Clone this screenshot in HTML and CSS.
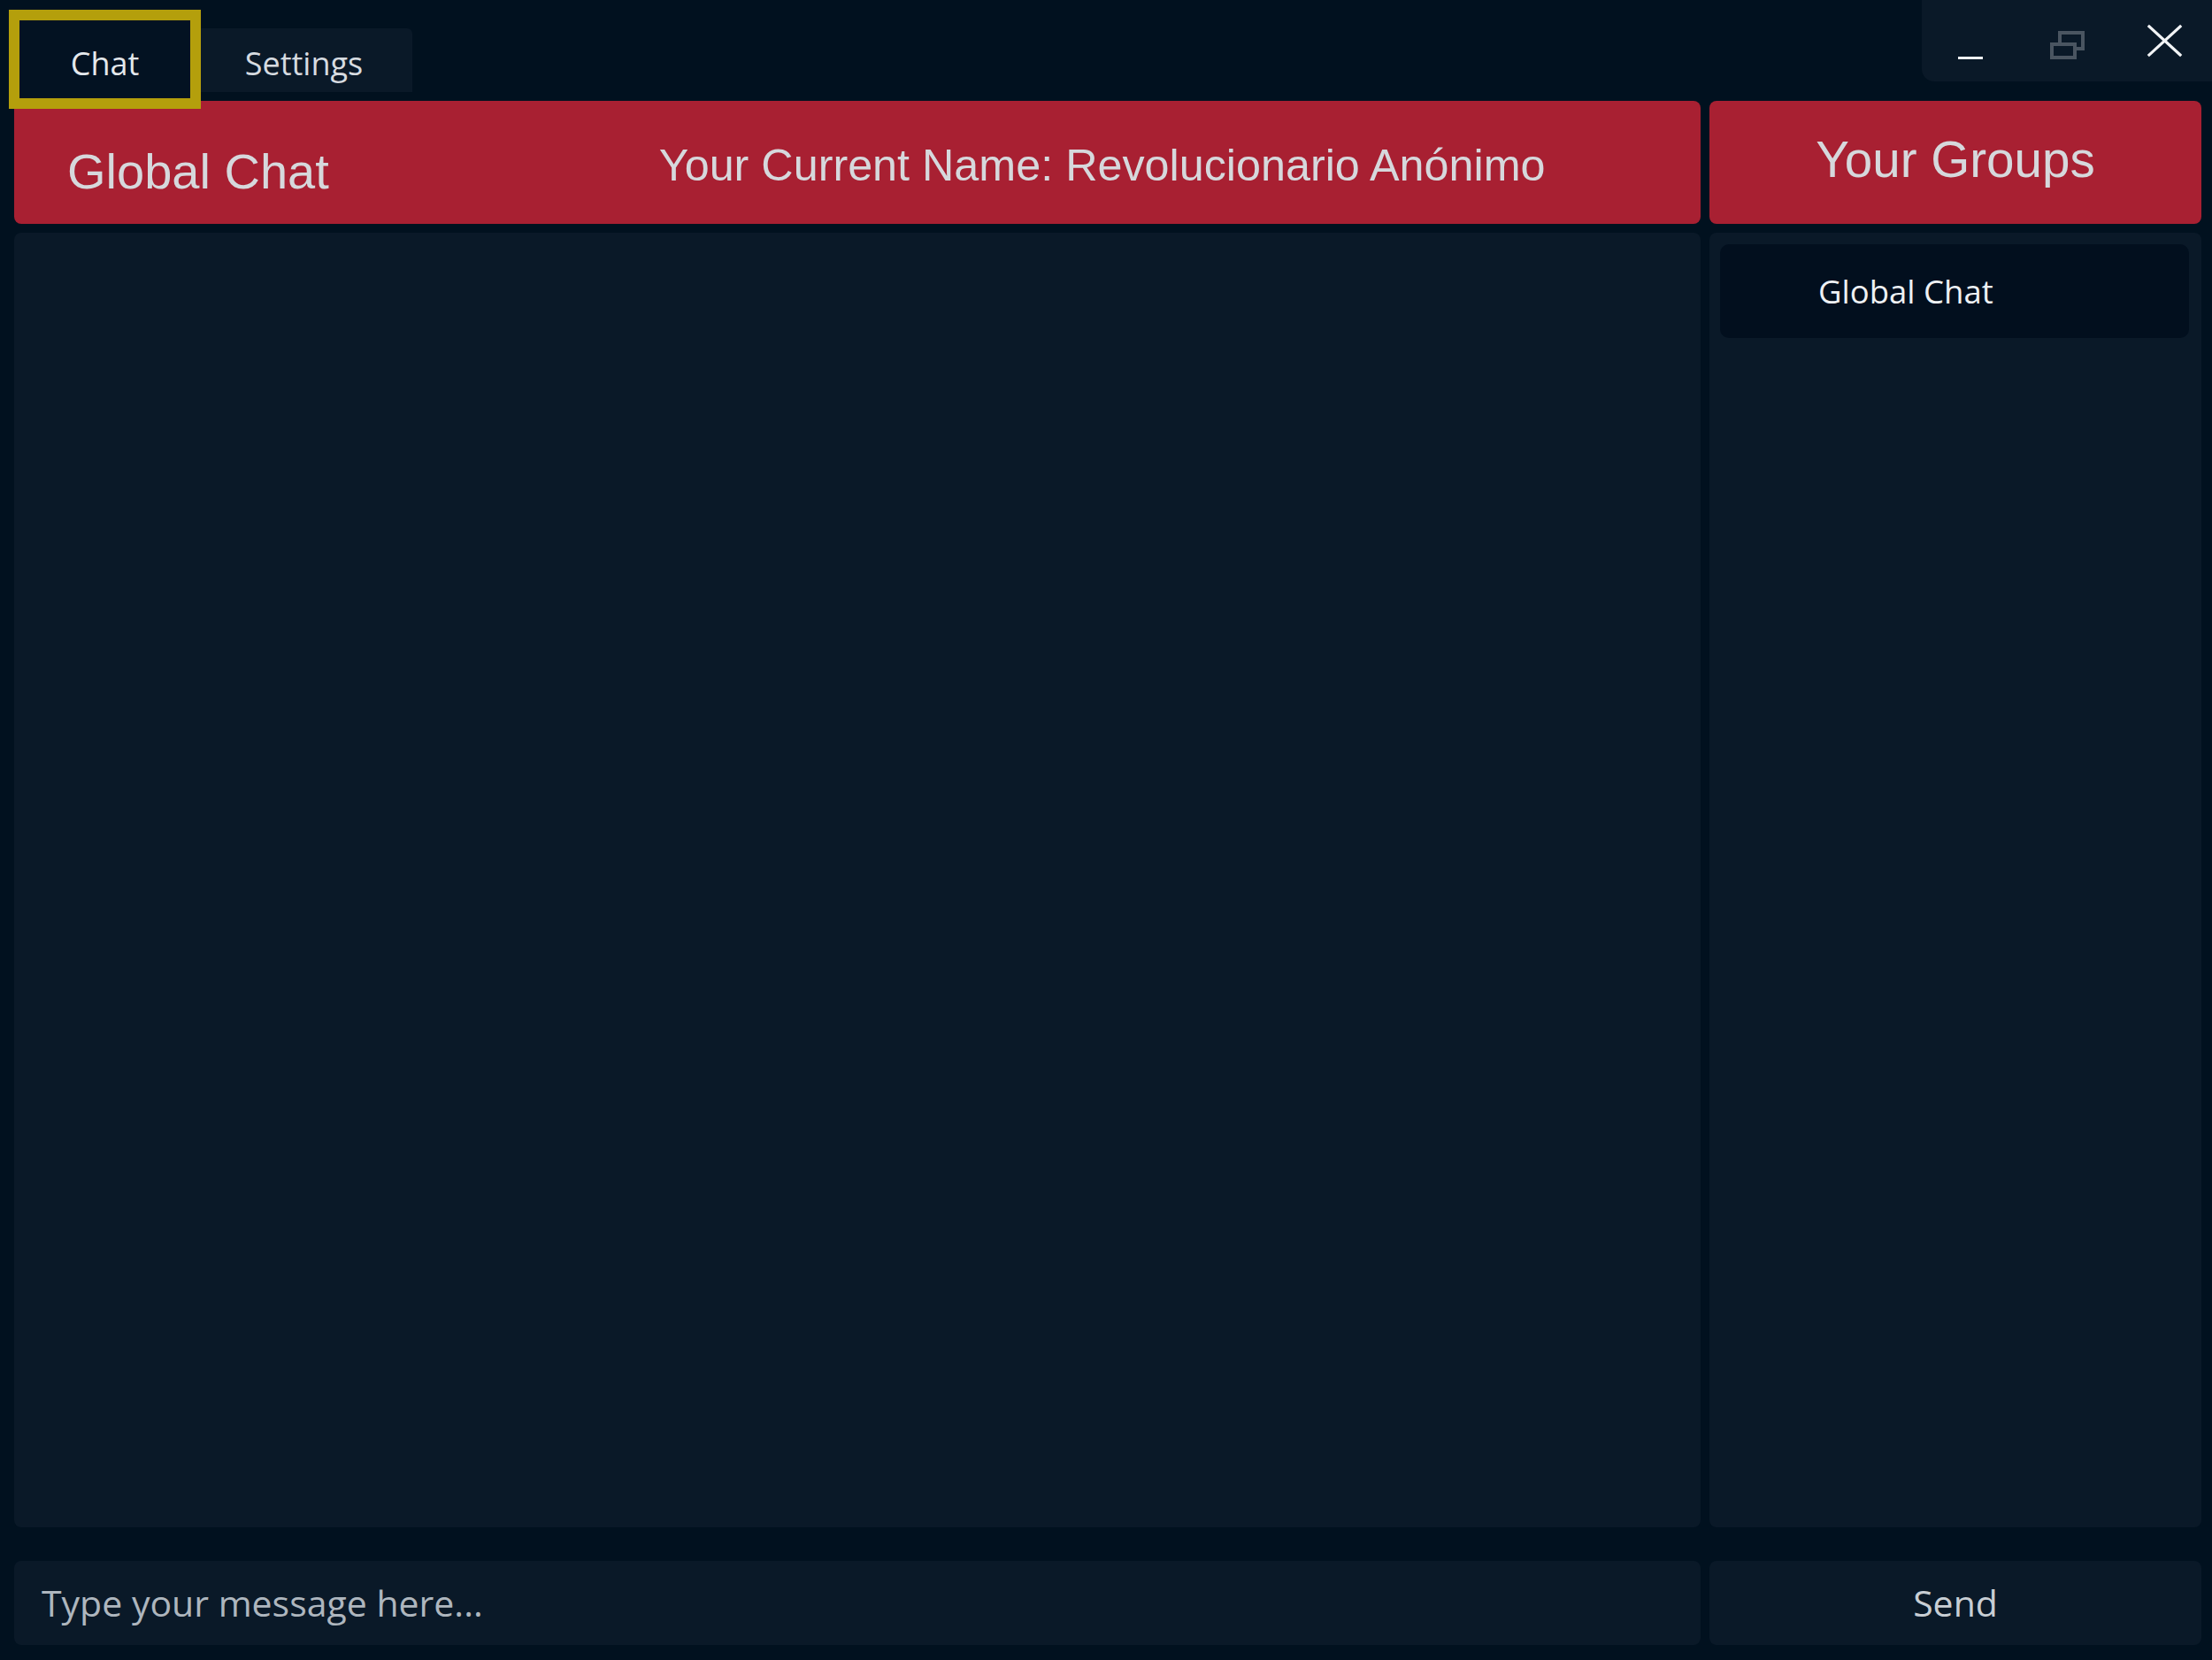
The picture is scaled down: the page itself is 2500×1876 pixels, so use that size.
FILE: index.html
```html
<!DOCTYPE html>
<html lang="en">
<head>
<meta charset="utf-8">
<title>Chat</title>
<link rel="stylesheet" href="styles.css">
</head>
<body>
<div class="app">
  <div class="topbar">
    <div class="tabs">
      <div class="tab tab-active">Chat</div>
      <div class="tab tab-settings">Settings</div>
    </div>
    <div class="winctrl">
      <svg class="winctrl-icons" width="328" height="92" viewBox="0 0 328 92">
        <rect x="41" y="64" width="28" height="3" fill="#eef0f2"/>
        <rect x="156" y="37" width="26" height="18" fill="none" stroke="#4a5561" stroke-width="4"/>
        <rect x="147" y="50" width="26" height="15" fill="#0a1928" stroke="#4a5561" stroke-width="4"/>
        <path d="M257 30 L292 62 M292 30 L257 62" stroke="#f2f4f6" stroke-width="3.2" stroke-linecap="square"/>
      </svg>
    </div>
  </div>
  <div class="main">
    <div class="hdr hdr-left">
      <div class="hdr-title">Global Chat</div>
      <div class="hdr-name">Your Current Name: Revolucionario Anónimo</div>
    </div>
    <div class="hdr hdr-right">
      <div class="hdr-groups">Your Groups</div>
    </div>
    <div class="panel chat-panel"></div>
    <div class="panel groups-panel">
      <div class="group-item">Global Chat</div>
    </div>
    <div class="input-box">Type your message here...</div>
    <div class="send-btn">Send</div>
  </div>
</div>
</body>
</html>
```
FILE: styles.css
```css
html, body {
  margin: 0;
  padding: 0;
  background: #01111f;
}
body {
  width: 2500px;
  height: 1876px;
  overflow: hidden;
  font-family: "Open Sans", "Noto Sans", sans-serif;
}
.app {
  display: flex;
  flex-direction: column;
}
.topbar {
  height: 114px;
  display: flex;
  justify-content: space-between;
  align-items: flex-start;
}
.tabs {
  display: flex;
  align-items: flex-start;
}
.tab {
  box-sizing: border-box;
  display: flex;
  align-items: center;
  justify-content: center;
  font-size: 36px;
  line-height: 1;
}
.tab-active {
  position: relative;
  z-index: 2;
  margin: 11px 0 0 10px;
  width: 217px;
  height: 112px;
  border: 12px solid rgba(243, 209, 5, 0.743);
  background: #031222;
  color: #e4e8ec;
  padding-top: 9px;
}
.tab-settings {
  margin-top: 32px;
  width: 239px;
  height: 72px;
  background: #0a1928;
  border-radius: 0 6px 0 0;
  color: #d6dbe0;
  padding-top: 7px;
  padding-right: 6px;
}
.winctrl {
  width: 328px;
  height: 92px;
  background: #0a1928;
  border-bottom-left-radius: 14px;
}
.winctrl-icons {
  display: block;
}
.main {
  display: grid;
  grid-template-columns: 1906px 556px;
  grid-template-rows: 139px 1463px 95px;
  column-gap: 10px;
  row-gap: 10px;
  padding: 0 12px 0 16px;
}
.hdr {
  background: #a82032;
  border-radius: 8px;
  display: flex;
  align-items: flex-start;
  font-family: "Liberation Sans", Arial, sans-serif;
  color: #d6d8dc;
  line-height: 1;
  white-space: nowrap;
}
.hdr-left {
  padding-left: 60px;
}
.hdr-title {
  font-size: 56px;
  margin-top: 52px;
}
.hdr-name {
  font-size: 50.3px;
  margin-top: 48px;
  margin-left: 373px;
}
.hdr-right {
  justify-content: center;
}
.hdr-groups {
  font-size: 56.6px;
  margin-top: 39px;
}
.panel {
  background: #0a1928;
  border-radius: 8px;
}
.groups-panel {
  box-sizing: border-box;
  padding: 13px 14px 0 12px;
}
.group-item {
  height: 106px;
  background: #020f1e;
  border-radius: 10px;
  display: flex;
  align-items: center;
  padding-left: 111px;
  font-size: 36.5px;
  line-height: 1;
  color: #eef1f4;
}
.input-box,
.send-btn {
  margin-top: 28px;
  height: 95px;
  background: #0a1928;
  border-radius: 8px;
  display: flex;
  align-items: center;
  font-size: 41px;
  line-height: 1;
}
.input-box {
  padding-left: 31px;
  color: #aeb6be;
}
.send-btn {
  justify-content: center;
  color: #c8ced4;
}
```
